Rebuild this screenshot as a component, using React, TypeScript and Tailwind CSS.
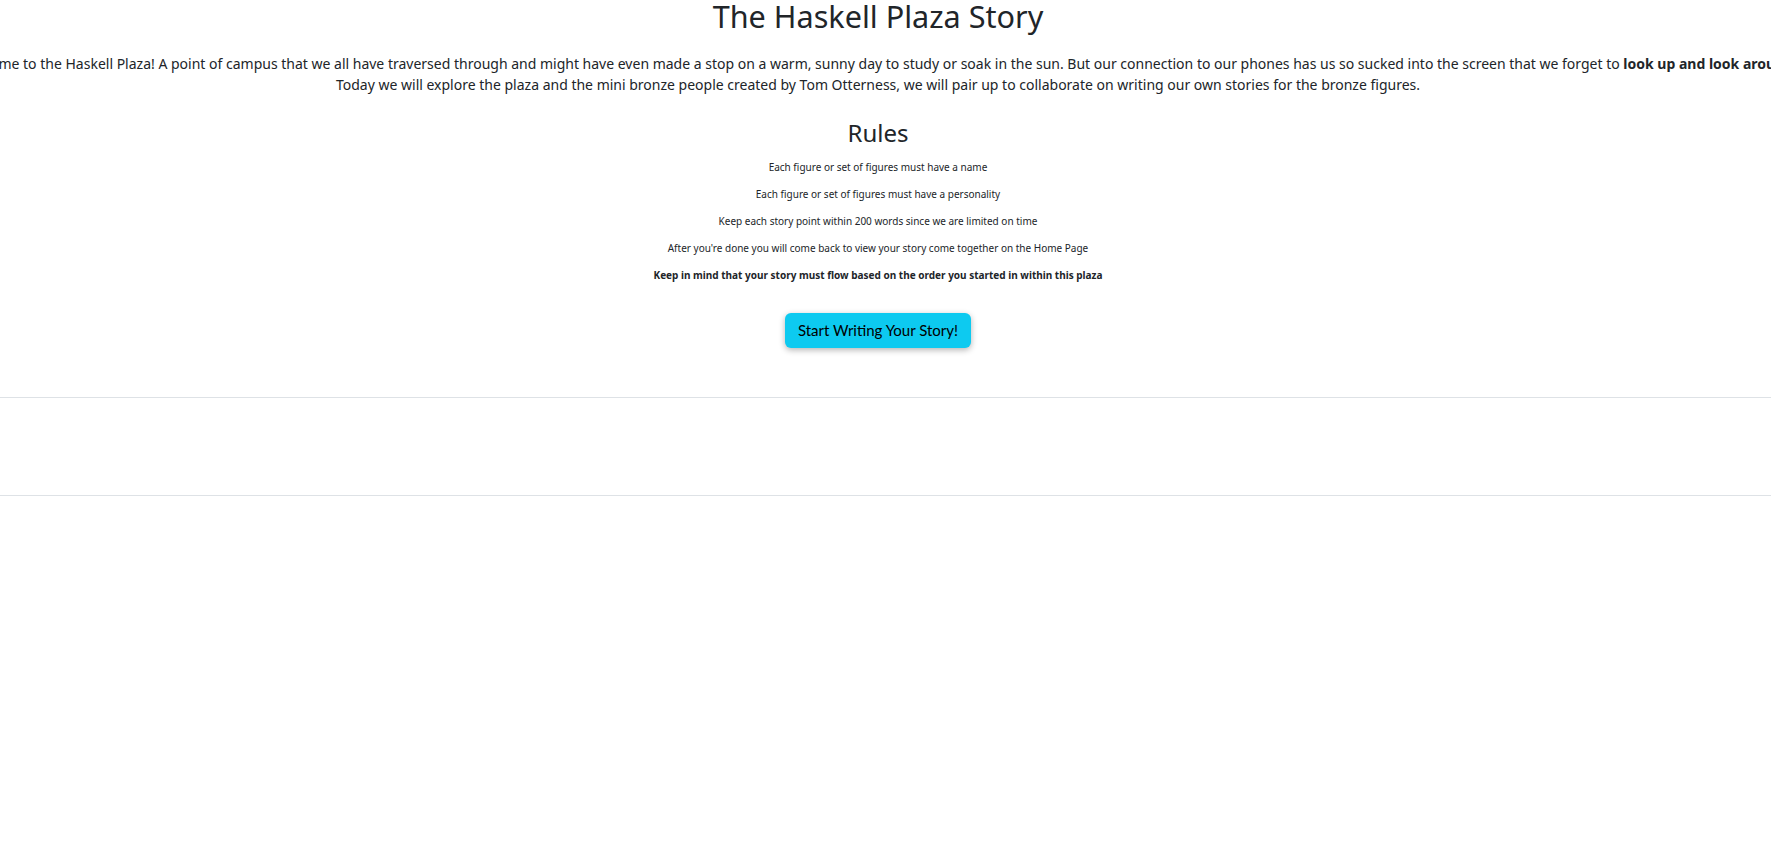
export default function App() {
  const rules = [
    'Each figure or set of figures must have a name',
    'Each figure or set of figures must have a personality',
    'Keep each story point within 200 words since we are limited on time',
    "After you're done you will come back to view your story come together on the Home Page",
  ];

  return (
    <div className="min-h-screen overflow-hidden bg-white text-[#212529] font-['Noto_Sans',sans-serif]">
      <div className="flex flex-col items-center pr-[15px]">
        <h1 className="text-[30.6px] leading-[33px] font-normal">The Haskell Plaza Story</h1>
        <p className="mt-[20px] whitespace-nowrap text-center text-[14px] leading-[21px]">
          Welcome to the Haskell Plaza! A point of campus that we all have traversed through and might have even
          made a stop on a warm, sunny day to study or soak in the sun. But our connection to our phones has us so
          sucked into the screen that we forget to <b>look up and look around.</b>
          <br />
          Today we will explore the plaza and the mini bronze people created by Tom Otterness, we will pair up to
          collaborate on writing our own stories for the bronze figures.
        </p>

        <h2 className="mt-[26px] text-[24px] leading-none font-normal">Rules</h2>
        <div className="mt-[15px] flex flex-col items-center gap-[12px] text-[10px] leading-[15px]">
          {rules.map((rule) => (
            <p key={rule}>{rule}</p>
          ))}
          <p className="font-bold">Keep in mind that your story must flow based on the order you started in within this plaza</p>
        </div>

        <button className="mt-[30px] h-[35px] px-[13px] rounded-[6px] bg-[#0dcaf0] text-black text-[15px] font-['Lato',sans-serif] shadow-[0_2px_6px_rgba(0,0,0,0.3)]">
          Start Writing Your Story!
        </button>
      </div>

      <div className="mt-[49px] h-[99px] border-y border-[#dee2e6]" />
    </div>
  );
}
